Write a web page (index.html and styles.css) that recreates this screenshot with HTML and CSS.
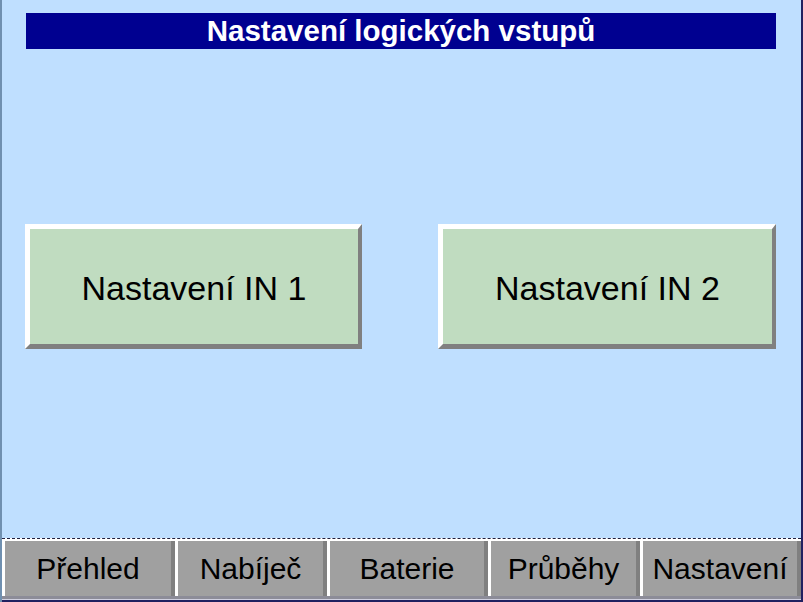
FILE: index.html
```html
<!DOCTYPE html>
<html lang="cs">
<head>
<meta charset="utf-8">
<title>Nastavení logických vstupů</title>
<link rel="stylesheet" href="styles.css">
</head>
<body>
<div class="screen">
  <div class="title">Nastavení logických vstupů</div>
  <div class="tiles">
    <div class="tile">Nastavení IN 1</div>
    <div class="tile">Nastavení IN 2</div>
  </div>
  <div class="nav">
    <div class="nav-row">
      <div class="nav-btn w-wide">Přehled</div>
      <div class="nav-btn w-narrow">Nabíječ</div>
      <div class="nav-btn w-mid">Baterie</div>
      <div class="nav-btn w-narrow">Průběhy</div>
      <div class="nav-btn w-mid">Nastavení</div>
    </div>
    <div class="nav-foot"></div>
  </div>
</div>
</body>
</html>
```

FILE: styles.css
```css
html, body {
  margin: 0;
  padding: 0;
  background: #bfdfff;
}
.screen {
  width: 803px;
  height: 602px;
  box-sizing: border-box;
  background: #bfdfff;
  border-left: 2px solid #7090b0;
  border-right: 2px solid #202060;
  display: flex;
  flex-direction: column;
  font-family: "Liberation Sans", Arial, sans-serif;
  overflow: hidden;
}
.title {
  margin: 13px 25px 0 24px;
  height: 36px;
  background: #000090;
  color: #ffffff;
  font-weight: bold;
  font-size: 29.5px;
  line-height: 1;
  display: flex;
  align-items: center;
  justify-content: center;
}
.tiles {
  margin-top: 175px;
  padding-left: 23px;
  display: flex;
  gap: 76px;
}
.tile {
  width: 337px;
  height: 125px;
  box-sizing: border-box;
  background: #c0dcc0;
  border-top: 5px solid #ffffff;
  border-left: 5px solid #ffffff;
  border-right: 4px solid #808080;
  border-bottom: 5px solid #808080;
  padding-top: 3px;
  display: flex;
  align-items: center;
  justify-content: center;
  font-size: 34px;
  color: #000000;
}
.tile + .tile {
  width: 338px;
}
.nav {
  margin-top: auto;
  height: 64px;
  box-sizing: border-box;
  background: #ffffff;
  border-top: 1px dashed #202040;
  padding-top: 2px;
  display: flex;
  flex-direction: column;
}
.nav-row {
  display: flex;
  height: 55px;
}
.nav-btn {
  box-sizing: border-box;
  height: 55px;
  background: #a0a0a0;
  border-left: 3px solid #ffffff;
  border-right: 4px solid #808080;
  display: flex;
  align-items: center;
  justify-content: center;
  font-size: 30px;
  color: #000000;
}
.w-wide { width: 173px; }
.w-narrow { width: 152px; }
.w-mid { width: 161px; }
.nav-foot {
  flex: 1;
  background: #8c8c98;
  border-bottom: 2px solid #202060;
  box-shadow: inset 0 -1px 0 #d0d0e0;
}
```
